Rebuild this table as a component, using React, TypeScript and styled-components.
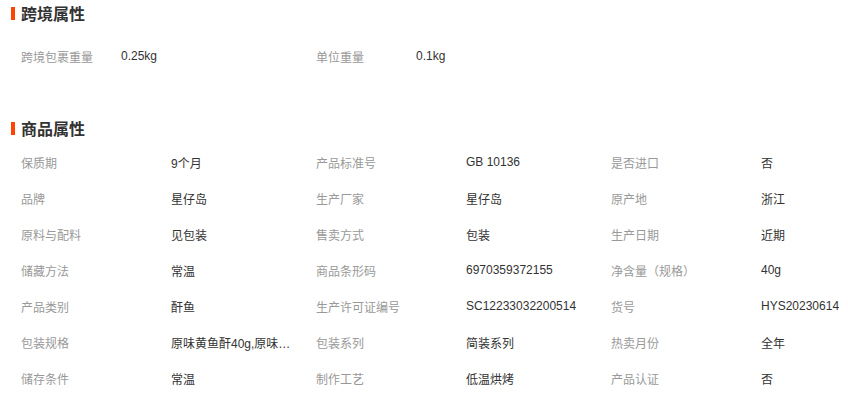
import styled, { createGlobalStyle } from 'styled-components';

const GlobalStyle = createGlobalStyle`
  html, body {
    margin: 0;
    padding: 0;
    background: #fff;
  }
  body {
    font-family: "Liberation Sans", "Noto Sans CJK SC", sans-serif;
    font-size: 12px;
    color: #333;
  }
`;

type Attr = { label: string; value: string };

const crossBorder: Attr[] = [
  { label: '跨境包裹重量', value: '0.25kg' },
  { label: '单位重量', value: '0.1kg' },
];

const goodsAttrs: Attr[] = [
  { label: '保质期', value: '9个月' },
  { label: '产品标准号', value: 'GB 10136' },
  { label: '是否进口', value: '否' },
  { label: '品牌', value: '星仔岛' },
  { label: '生产厂家', value: '星仔岛' },
  { label: '原产地', value: '浙江' },
  { label: '原料与配料', value: '见包装' },
  { label: '售卖方式', value: '包装' },
  { label: '生产日期', value: '近期' },
  { label: '储藏方法', value: '常温' },
  { label: '商品条形码', value: '6970359372155' },
  { label: '净含量（规格）', value: '40g' },
  { label: '产品类别', value: '酐鱼' },
  { label: '生产许可证编号', value: 'SC12233032200514' },
  { label: '货号', value: 'HYS20230614' },
  { label: '包装规格', value: '原味黄鱼酐40g,原味黄鱼酐80g' },
  { label: '包装系列', value: '简装系列' },
  { label: '热卖月份', value: '全年' },
  { label: '储存条件', value: '常温' },
  { label: '制作工艺', value: '低温烘烤' },
  { label: '产品认证', value: '否' },
];

export default function App() {
  return (
    <>
      <GlobalStyle />
      <Page>
        <Section>
          <SectionTitle>跨境属性</SectionTitle>
          <AttrGrid>
            {crossBorder.map((item) => (
              <AttrItem key={item.label}>
                <AttrLabel $width={100}>{item.label}</AttrLabel>
                <AttrValue>{item.value}</AttrValue>
              </AttrItem>
            ))}
          </AttrGrid>
        </Section>
        <Section $gap={41}>
          <SectionTitle>商品属性</SectionTitle>
          <AttrGrid $compact>
            {goodsAttrs.map((item) => (
              <AttrItem key={item.label}>
                <AttrLabel $width={150}>{item.label}</AttrLabel>
                <AttrValue>{item.value}</AttrValue>
              </AttrItem>
            ))}
          </AttrGrid>
        </Section>
      </Page>
    </>
  );
}

const Page = styled.div`
  width: 848px;
  height: 404px;
  overflow: hidden;
`;

const Section = styled.section<{ $gap?: number }>`
  margin-top: ${(p) => p.$gap ?? 0}px;
`;

const SectionTitle = styled.h3`
  display: flex;
  align-items: center;
  gap: 6px;
  height: 26px;
  margin: 0;
  padding-left: 11px;
  font-size: 16px;
  font-weight: bold;
  color: #333;

  &::before {
    content: '';
    width: 4px;
    height: 13px;
    background: #ff4400;
  }
`;

const AttrGrid = styled.div<{ $compact?: boolean }>`
  display: grid;
  grid-template-columns: repeat(3, 295px);
  grid-auto-rows: 36px;
  padding-left: 21px;
  margin-top: ${(p) => (p.$compact ? 3 : 12)}px;
`;

const AttrItem = styled.div`
  display: flex;
  align-items: center;
  min-width: 0;
`;

const AttrLabel = styled.span<{ $width: number }>`
  flex: none;
  width: ${(p) => p.$width}px;
  color: #999;
`;

const AttrValue = styled.span`
  max-width: 120px;
  color: #333;
  white-space: nowrap;
  overflow: hidden;
  text-overflow: ellipsis;
`;
